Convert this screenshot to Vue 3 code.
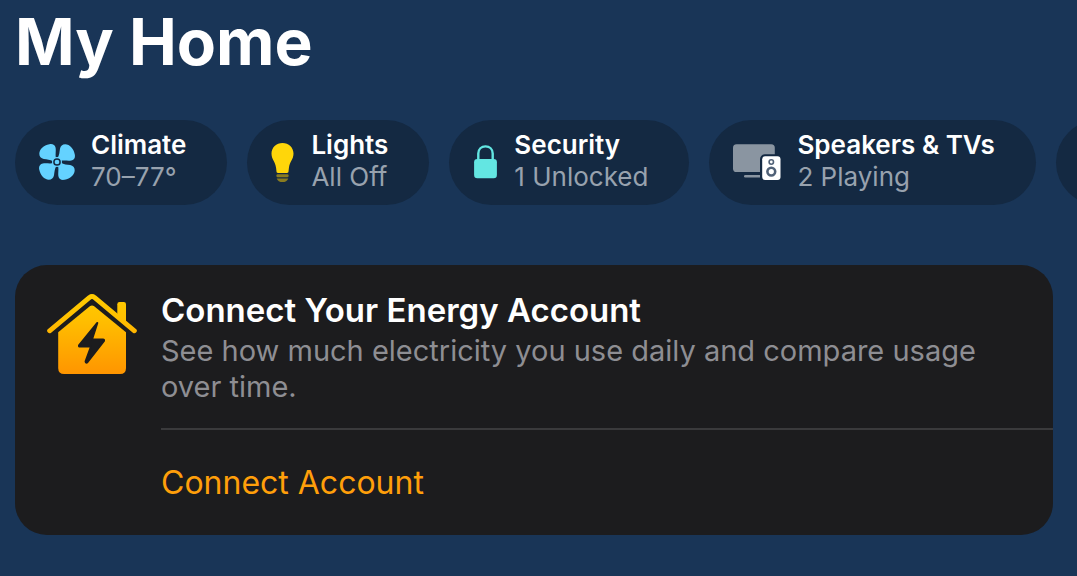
<script setup>
const categories = [
  { id: 'climate', title: 'Climate', status: '70–77°' },
  { id: 'lights', title: 'Lights', status: 'All Off' },
  { id: 'security', title: 'Security', status: '1 Unlocked' },
  { id: 'media', title: 'Speakers & TVs', status: '2 Playing' },
]
const petalAngles = [0, 90, 180, 270]
</script>

<template>
  <main class="home">
    <h1 class="heading">My Home</h1>

    <nav class="chips" aria-label="Categories">
      <button v-for="c in categories" :key="c.id" type="button" class="chip">
        <svg v-if="c.id === 'climate'" width="36" height="36" viewBox="0 0 36 36" aria-hidden="true">
          <path
            v-for="a in petalAngles"
            :key="a"
            :transform="`rotate(${a} 18 18)`"
            fill="#64d2ff"
            d="M17.2 15 C15.9 11.6 17.2 7.6 16.6 3.8 C16 0.7 13.4 -0.4 10.4 0.2 C4.6 1.4 0.4 5.2 0.3 9.8 C0.3 12.6 2 14.4 4.8 15 C8 15.6 11 15.4 14.4 17.6 Z"
          />
          <circle cx="18" cy="18" r="5" fill="#64d2ff" />
          <circle cx="18" cy="18" r="3.1" fill="#64d2ff" stroke="#142942" stroke-width="1.5" />
        </svg>
        <svg v-else-if="c.id === 'lights'" width="24" height="39" viewBox="0 0 24 39" aria-hidden="true">
          <path
            fill="#ffd60a"
            d="M11.5 0 C5.3 0 0.5 4.6 0.5 10.6 C0.5 16.6 4.3 18.6 5.1 25 L5.5 28.6 C5.6 29.6 6 30 6.9 30 H16.1 C17 30 17.4 29.6 17.5 28.6 L17.9 25 C18.7 18.6 22.5 16.6 22.5 10.6 C22.5 4.6 17.7 0 11.5 0 Z"
          />
          <rect x="5.5" y="31.2" width="12" height="3" rx="1" fill="#8a7c20" />
          <path fill="#8a7c20" d="M5.7 35.4 H17.3 C16.5 37.8 14.3 39 11.5 39 C8.7 39 6.5 37.8 5.7 35.4 Z" />
        </svg>
        <svg v-else-if="c.id === 'security'" width="25" height="34" viewBox="0 0 25 34" aria-hidden="true">
          <path fill="none" stroke="#63e6e2" stroke-width="2.4" d="M5.3 15 V8.6 C5.3 4.2 8.5 1.4 12.5 1.4 C16.5 1.4 19.7 4.2 19.7 8.6 V15" />
          <rect x="1.1" y="14" width="22.8" height="19.3" rx="3.2" fill="#63e6e2" />
        </svg>
        <svg v-else width="48" height="36" viewBox="0 0 48 36" aria-hidden="true">
          <rect x="0" y="0.3" width="41.8" height="27.7" rx="3.6" fill="#8a95a1" />
          <rect x="11" y="31" width="24" height="2.6" rx="1.3" fill="#8a95a1" />
          <rect x="27" y="10.2" width="23" height="28" rx="5" fill="#142942" />
          <rect x="29.2" y="12.3" width="18.3" height="23.7" rx="3" fill="#fff" />
          <circle cx="38.3" cy="18" r="2.2" fill="none" stroke="#506177" stroke-width="1.6" />
          <circle cx="38.3" cy="27.6" r="3.9" fill="none" stroke="#506177" stroke-width="2.6" />
        </svg>
        <span class="chip-text">
          <span class="chip-title">{{ c.title }}</span>
          <span class="chip-status">{{ c.status }}</span>
        </span>
      </button>
      <button type="button" class="chip chip-next" aria-label="More"></button>
    </nav>

    <section class="card">
      <svg class="house" width="90" height="80" viewBox="0 0 90 80" aria-hidden="true">
        <defs>
          <linearGradient id="energy" gradientUnits="userSpaceOnUse" x1="0" y1="0" x2="0" y2="80">
            <stop offset="0" stop-color="#ffcc00" />
            <stop offset="0.3" stop-color="#ffc000" />
            <stop offset="1" stop-color="#ff9500" />
          </linearGradient>
        </defs>
        <path fill="url(#energy)" d="M70.3 24 V10.2 Q70.3 8 72.5 8 H76.8 Q79 8 79 10.2 V31.5 Z" />
        <path
          fill="none"
          stroke="url(#energy)"
          stroke-width="4.8"
          stroke-linecap="round"
          stroke-linejoin="round"
          d="M2.6 36.8 L42.6 3.4 Q45 1.6 47.4 3.4 L87.4 36.8"
        />
        <path
          fill="url(#energy)"
          d="M11.2 38.3 L42.8 12.2 Q45 10.6 47.2 12.2 L79 38.3 V74 Q79 80 73 80 H17.2 Q11.2 80 11.2 74 Z"
        />
        <path
          fill="#1c1c1e"
          stroke="#1c1c1e"
          stroke-width="2"
          stroke-linejoin="round"
          d="M50.3 29 L32 51.4 Q31.6 52.6 33 52.6 H44 L38.6 67.4 Q38.8 69.6 40.4 68.2 L57 46.8 Q57.4 45.4 56 45.4 H45 Z"
        />
      </svg>
      <div class="card-main">
        <div class="card-copy">
          <h2 class="card-title">Connect Your Energy Account</h2>
          <p class="card-body">See how much electricity you use daily and compare usage over time.</p>
        </div>
        <button type="button" class="connect">Connect Account</button>
      </div>
    </section>
  </main>
</template>

<style>
body {
  background: #193557;
}
</style>

<style scoped>
.home {
  padding: 2px 24px 40px 15px;
  font-family: Inter, "Liberation Sans", sans-serif;
  color: #fff;
}
.heading {
  margin: 0;
  font-size: 64px;
  line-height: 80px;
  font-weight: 700;
}
.chips {
  display: flex;
  gap: 20px;
  margin: 38px -24px 0 0;
  overflow: hidden;
}
.chip {
  display: flex;
  align-items: center;
  flex: none;
  gap: 16px;
  padding: 9px 41px 12px 24px;
  border: 0;
  border-radius: 43px;
  background: #142942;
  font: inherit;
  color: inherit;
  text-align: left;
}
.chip-next {
  width: 200px;
}
.chip svg {
  position: relative;
  top: 1px;
  flex: none;
}
.chip-text {
  display: flex;
  flex-direction: column;
  font-size: 26px;
  line-height: 32px;
}
.chip-title {
  font-weight: 600;
}
.chip-status {
  color: #98a2ae;
}
.card {
  display: flex;
  gap: 24px;
  margin-top: 60px;
  padding-left: 32px;
  border-radius: 32px;
  background: #1c1c1e;
}
.house {
  flex: none;
  margin-top: 29px;
}
.card-main {
  flex: 1;
}
.card-copy {
  padding: 24px 64px 23px 0;
  border-bottom: 2px solid #3a3a3c;
}
.card-title {
  margin: 0 0 2px;
  font-size: 33px;
  line-height: 42px;
  font-weight: 600;
}
.card-body {
  margin: 0;
  font-size: 29px;
  line-height: 36px;
  color: #8e8e93;
}
.connect {
  display: block;
  width: 100%;
  padding: 32px 0 31px;
  border: 0;
  background: none;
  font: inherit;
  font-size: 32px;
  line-height: 42px;
  color: #ff9f0a;
  text-align: left;
}
</style>
